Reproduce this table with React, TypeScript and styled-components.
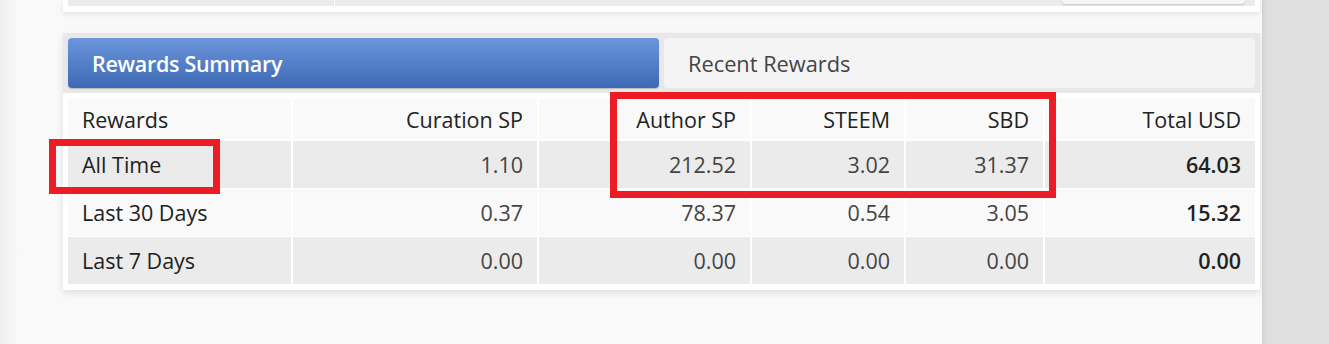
import React from 'react'
import styled, { createGlobalStyle } from 'styled-components'

const GlobalStyle = createGlobalStyle`
  html, body {
    margin: 0;
    padding: 0;
    background: #f9f9f9;
    font-family: "Open Sans", "Liberation Sans", sans-serif;
  }
`

const Page = styled.div`
  position: relative;
  display: flex;
  width: 1329px;
  height: 344px;
  overflow: hidden;
`

const Main = styled.main`
  width: 1262px;
  padding: 0 2px 0 63px;
  box-sizing: border-box;
  background: linear-gradient(to right, #efefef 0px, #f9f9f9 18px);
`

const Sidebar = styled.aside`
  flex: 1;
  background: linear-gradient(to right, #d2d2d2 0px, #dddddd 4px, #e0e0e0 10px);
`

const PrevCard = styled.div`
  position: relative;
  height: 12px;
  background: #fff;
  box-shadow: 0 2px 5px rgba(0, 0, 0, 0.09);
  padding: 0 5px;
  box-sizing: border-box;
`

const PrevRow = styled.div`
  display: grid;
  grid-template-columns: 266px 1fr;
  height: 6px;
  gap: 1px;
  background: #fff;
`

const PrevCell = styled.div`
  background: #ebebeb;
`

const PrevButton = styled.div`
  position: absolute;
  top: 0;
  left: 999px;
  width: 183px;
  height: 4px;
  background: #f5f5f5;
  border-radius: 0 0 4px 4px;
  box-shadow: 0 1px 2px rgba(0, 0, 0, 0.15);
`

const Card = styled.section`
  margin-top: 21px;
  background: #fff;
  box-shadow: 0 3px 7px rgba(0, 0, 0, 0.1);
`

const TabStrip = styled.div`
  display: grid;
  grid-template-columns: 591px 1fr;
  gap: 5px;
  padding: 5px;
  background: #e8e8e8;
`

const Tab = styled.div<{ $active?: boolean }>`
  height: 50px;
  display: flex;
  align-items: center;
  padding-left: 24px;
  border-radius: 4px;
  font-size: ${(p) => (p.$active ? '21.5px' : '21.8px')};
  font-weight: ${(p) => (p.$active ? 600 : 400)};
  color: ${(p) => (p.$active ? '#fff' : '#444')};
  background: ${(p) =>
    p.$active ? 'linear-gradient(to bottom, #6b96dc, #3d69b5)' : '#f4f4f4'};
  box-shadow: ${(p) => (p.$active ? '0 1px 1px rgba(0,0,0,0.2)' : 'none')};
  letter-spacing: ${(p) => (p.$active ? '-0.3px' : '0')};
`

const TableWrap = styled.div`
  padding: 6px 5px;
`

const Table = styled.table`
  width: 1187px;
  table-layout: fixed;
  border-collapse: collapse;
  font-size: 21.5px;
`

const HeadCell = styled.th<{ $left?: boolean }>`
  height: 40px;
  padding: ${(p) => (p.$left ? '0 0 0 14px' : '0 14px 0 0')};
  text-align: ${(p) => (p.$left ? 'left' : 'right')};
  font-weight: 500;
  color: #222;
  background: #f9f9f9;
  border-left: 2px solid #fff;
  border-bottom: 1px solid #c8c8c8;
  &:first-child {
    border-left: none;
  }
`

const Row = styled.tr<{ $shade?: boolean }>`
  background: ${(p) => (p.$shade ? '#ebebeb' : '#f9f9f9')};
  border-top: 1px solid #fff;
  &:first-child {
    border-top: 2px solid #fff;
  }
`

const Cell = styled.td<{ $kind?: 'label' | 'num' | 'total' }>`
  height: 47px;
  padding: ${(p) => (p.$kind === 'label' ? '0 0 0 14px' : '0 14px 0 0')};
  text-align: ${(p) => (p.$kind === 'label' ? 'left' : 'right')};
  color: ${(p) => (p.$kind === 'num' ? '#444' : '#222')};
  font-weight: ${(p) => (p.$kind === 'total' ? 600 : p.$kind === 'label' ? 500 : 400)};
  border-left: 2px solid #fff;
  &:first-child {
    border-left: none;
  }
`

const Mark = styled.div<{ $x: number; $y: number; $w: number; $h: number }>`
  position: absolute;
  left: ${(p) => p.$x}px;
  top: ${(p) => p.$y}px;
  width: ${(p) => p.$w}px;
  height: ${(p) => p.$h}px;
  box-sizing: border-box;
  border: 7px solid #ed1c24;
  pointer-events: none;
`

const columns = [224, 246, 213, 154, 139, 211]
const headers = ['Rewards', 'Curation SP', 'Author SP', 'STEEM', 'SBD', 'Total USD']

const rows = [
  { label: 'All Time', values: ['1.10', '212.52', '3.02', '31.37'], total: '64.03' },
  { label: 'Last 30 Days', values: ['0.37', '78.37', '0.54', '3.05'], total: '15.32' },
  { label: 'Last 7 Days', values: ['0.00', '0.00', '0.00', '0.00'], total: '0.00' },
]

const App = () => {
  return (
    <>
      <GlobalStyle />
      <Page>
        <Main>
          <PrevCard>
            <PrevRow>
              <PrevCell />
              <PrevCell />
            </PrevRow>
            <PrevButton />
          </PrevCard>
          <Card>
            <TabStrip>
              <Tab $active>Rewards Summary</Tab>
              <Tab>Recent Rewards</Tab>
            </TabStrip>
            <TableWrap>
              <Table>
                <colgroup>
                  {columns.map((w, i) => (
                    <col key={i} style={{ width: w }} />
                  ))}
                </colgroup>
                <thead>
                  <tr>
                    {headers.map((h, i) => (
                      <HeadCell key={h} $left={i === 0}>{h}</HeadCell>
                    ))}
                  </tr>
                </thead>
                <tbody>
                  {rows.map((r, i) => (
                    <Row key={r.label} $shade={i !== 1}>
                      <Cell $kind="label">{r.label}</Cell>
                      {r.values.map((v, j) => (
                        <Cell key={j} $kind="num">{v}</Cell>
                      ))}
                      <Cell $kind="total">{r.total}</Cell>
                    </Row>
                  ))}
                </tbody>
              </Table>
            </TableWrap>
          </Card>
        </Main>
        <Sidebar />
        <Mark $x={49} $y={139} $w={171} $h={55} />
        <Mark $x={610} $y={92} $w={446} $h={106} />
      </Page>
    </>
  )
}

export default App
